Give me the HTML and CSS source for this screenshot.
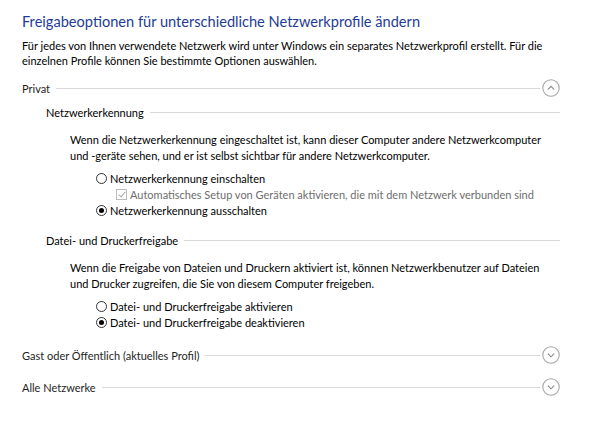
FILE: index.html
```html
<!DOCTYPE html>
<html>
  <head>
    <meta charset="utf-8" />
    <title>Erweiterte Freigabeeinstellungen</title>
    <meta name="viewport" content="width=device-width, initial-scale=1" />
    <link rel="stylesheet" href="styles.css">
  </head>
  <body>
    <div class="page">
      <div class="title">Freigabeoptionen für unterschiedliche Netzwerkprofile ändern</div>
      <p class="intro">Für jedes von Ihnen verwendete Netzwerk wird unter Windows ein separates Netzwerkprofil erstellt. Für die<br>einzelnen Profile können Sie bestimmte Optionen auswählen.</p>

      <div class="profile-head first">
        <span>Privat</span>
        <span class="rule"></span>
        <svg class="chevron" width="18" height="18" viewBox="0 0 18 18">
          <circle cx="9" cy="9" r="8.2" fill="none" stroke="#a6a6a6" stroke-width="1.1"/>
          <path d="M5.8 10.6 L9 7.4 L12.2 10.6" fill="none" stroke="#8a8a8a" stroke-width="1.1"/>
        </svg>
      </div>

      <div class="group">
        <div class="group-head">
          <span>Netzwerkerkennung</span>
          <span class="rule"></span>
        </div>
        <p class="desc">Wenn die Netzwerkerkennung eingeschaltet ist, kann dieser Computer andere Netzwerkcomputer<br>und -geräte sehen, und er ist selbst sichtbar für andere Netzwerkcomputer.</p>
        <div class="options">
          <div class="opt"><span class="radio"></span>Netzwerkerkennung einschalten</div>
          <div class="opt sub disabled"><span class="check"></span>Automatisches Setup von Geräten aktivieren, die mit dem Netzwerk verbunden sind</div>
          <div class="opt"><span class="radio on"></span>Netzwerkerkennung ausschalten</div>
        </div>
      </div>

      <div class="group">
        <div class="group-head">
          <span>Datei- und Druckerfreigabe</span>
          <span class="rule"></span>
        </div>
        <p class="desc">Wenn die Freigabe von Dateien und Druckern aktiviert ist, können Netzwerkbenutzer auf Dateien<br>und Drucker zugreifen, die Sie von diesem Computer freigeben.</p>
        <div class="options">
          <div class="opt"><span class="radio"></span>Datei- und Druckerfreigabe aktivieren</div>
          <div class="opt"><span class="radio on"></span>Datei- und Druckerfreigabe deaktivieren</div>
        </div>
      </div>

      <div class="profile-head after-group">
        <span>Gast oder Öffentlich (aktuelles Profil)</span>
        <span class="rule"></span>
        <svg class="chevron" width="18" height="18" viewBox="0 0 18 18">
          <circle cx="9" cy="9" r="8.2" fill="none" stroke="#a6a6a6" stroke-width="1.1"/>
          <path d="M5.8 7.6 L9 10.8 L12.2 7.6" fill="none" stroke="#8a8a8a" stroke-width="1.1"/>
        </svg>
      </div>

      <div class="profile-head">
        <span>Alle Netzwerke</span>
        <span class="rule"></span>
        <svg class="chevron" width="18" height="18" viewBox="0 0 18 18">
          <circle cx="9" cy="9" r="8.2" fill="none" stroke="#a6a6a6" stroke-width="1.1"/>
          <path d="M5.8 7.6 L9 10.8 L12.2 7.6" fill="none" stroke="#8a8a8a" stroke-width="1.1"/>
        </svg>
      </div>
    </div>
  </body>
</html>
```

FILE: styles.css
```css
body {
  margin: 0;
  background: #ffffff;
  font-family: Lato, "Open Sans", sans-serif;
  font-size: 11px;
  color: #000000;
}

.page {
  padding: 12px 0 0 22px;
  width: 538px;
}

.title {
  font-size: 14.6px;
  line-height: 20px;
  color: #1e3c96;
}

.intro {
  margin: 6px 0 0 0;
  line-height: 15px;
  white-space: nowrap;
}

.profile-head {
  display: flex;
  align-items: center;
  height: 20px;
  margin-top: 12px;
  color: #1e1e1e;
  white-space: nowrap;
}

.profile-head.first {
  margin-top: 10px;
}

.profile-head.after-group {
  margin-top: 15px;
}

.rule {
  flex: 1;
  height: 1px;
  background: #d9d9d9;
  margin-left: 6px;
}

.chevron {
  flex-shrink: 0;
  margin-left: 2px;
}

.group {
  padding-left: 24px;
}

.group-head {
  display: flex;
  align-items: center;
  height: 20px;
  margin-top: 4px;
  white-space: nowrap;
}

.group + .group .group-head {
  margin-top: 12px;
}

.desc {
  margin: 10px 0 0 24px;
  line-height: 16px;
  white-space: nowrap;
}

.options {
  margin: 6px 0 0 50px;
}

.opt {
  display: flex;
  align-items: center;
  height: 16px;
  white-space: nowrap;
}

.opt.sub {
  padding-left: 20px;
}

.opt.disabled {
  color: #6d6d6d;
}

.radio {
  flex-shrink: 0;
  width: 11px;
  height: 11px;
  border: 1px solid #333333;
  border-radius: 50%;
  margin-right: 3px;
  box-sizing: border-box;
  display: flex;
  align-items: center;
  justify-content: center;
}

.radio.on::after {
  content: "";
  width: 5px;
  height: 5px;
  border-radius: 50%;
  background: #000000;
}

.check {
  flex-shrink: 0;
  width: 11px;
  height: 11px;
  border: 1px solid #bcbcbc;
  box-sizing: border-box;
  margin-right: 3px;
  position: relative;
}

.check::after {
  content: "";
  position: absolute;
  left: 3px;
  top: 0px;
  width: 3px;
  height: 6px;
  border: solid #a8a8a8;
  border-width: 0 1px 1px 0;
  transform: rotate(40deg);
}
```
